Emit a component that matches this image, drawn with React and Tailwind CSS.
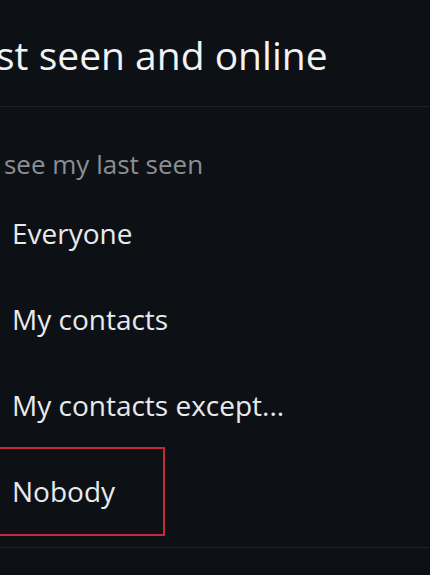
const OPTIONS = ["Everyone", "My contacts", "My contacts except..."];

export default function App() {
  return (
    <div
      className="w-[430px] h-[575px] overflow-hidden bg-[#0d1116] text-[#eceef0]"
      style={{ fontFamily: '"Open Sans", "Noto Sans", sans-serif' }}
    >
      {/* header */}
      <div className="h-[107px] border-b border-[#1d2227] overflow-hidden">
        <div className="pt-[27px] -ml-[46px] whitespace-nowrap text-[39px] leading-[56px] text-[#f1f3f4]">
          Last seen and online
        </div>
      </div>

      {/* section */}
      <div className="h-[83px] overflow-hidden">
        <div className="pt-[41px] -ml-[108px] whitespace-nowrap text-[26px] leading-[32px] text-[#8b8f93]">
          Who can see my last seen
        </div>
      </div>

      {OPTIONS.map((label) => (
        <div key={label} className="h-[86px] flex items-center pl-[12px] text-[28px] text-[#e8eaec]">
          {label}
        </div>
      ))}

      <div className="h-[86px] flex items-center">
        <div className="w-[165px] h-[89px] border-2 border-l-0 border-[#c4283a] flex items-center pl-[12px] text-[28px] text-[#e8eaec]">
          Nobody
        </div>
      </div>

      <div className="mt-[13px] border-b border-[#1d2227]" />
    </div>
  );
}
